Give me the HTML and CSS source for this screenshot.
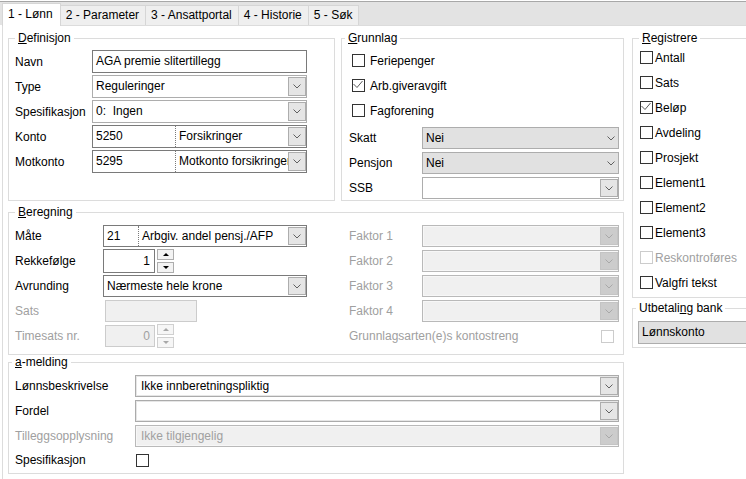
FILE: index.html
```html
<!DOCTYPE html>
<html lang="no">

<head>
    <meta charset="UTF-8">
    <meta name="viewport" content="width=device-width, initial-scale=1.0">
    <title>Lønnsart</title>
    <link rel="stylesheet" href="styles.css">
</head>

<body>
    <div class="tabs">
        <div class="tab active">1 - Lønn</div>
        <div class="tab">2 - Parameter</div>
        <div class="tab">3 - Ansattportal</div>
        <div class="tab">4 - Historie</div>
        <div class="tab">5 - Søk</div>
    </div>

    <div class="page">
        <div class="main">
            <div class="top-row">
                <!-- Definisjon -->
                <div class="group def">
                    <div class="legend"><u>D</u>efinisjon</div>
                    <div class="body">
                        <div class="row">
                            <span class="lbl">Navn</span>
                            <div class="field dark"><span class="val">AGA premie slitertillegg</span></div>
                        </div>
                        <div class="row">
                            <span class="lbl">Type</span>
                            <div class="field">
                                <span class="val">Reguleringer</span>
                                <span class="btn"><svg class="chev" width="8" height="5" viewBox="0 0 8 5"><path d="M.5 .5 4 4 7.5 .5" /></svg></span>
                            </div>
                        </div>
                        <div class="row">
                            <span class="lbl">Spesifikasjon</span>
                            <div class="field">
                                <span class="val">0:&nbsp; Ingen</span>
                                <span class="btn"><svg class="chev" width="8" height="5" viewBox="0 0 8 5"><path d="M.5 .5 4 4 7.5 .5" /></svg></span>
                            </div>
                        </div>
                        <div class="row">
                            <span class="lbl">Konto</span>
                            <div class="field dark">
                                <span class="code">5250</span>
                                <span class="val name">Forsikringer</span>
                                <span class="btn"><svg class="chev" width="8" height="5" viewBox="0 0 8 5"><path d="M.5 .5 4 4 7.5 .5" /></svg></span>
                            </div>
                        </div>
                        <div class="row">
                            <span class="lbl">Motkonto</span>
                            <div class="field dark">
                                <span class="code">5295</span>
                                <span class="val name">Motkonto forsikringer</span>
                                <span class="btn"><svg class="chev" width="8" height="5" viewBox="0 0 8 5"><path d="M.5 .5 4 4 7.5 .5" /></svg></span>
                            </div>
                        </div>
                    </div>
                </div>

                <!-- Grunnlag -->
                <div class="group grunnlag">
                    <div class="legend near"><u>G</u>runnlag</div>
                    <div class="body">
                        <div class="chk">
                            <span class="cb"></span>Feriepenger
                        </div>
                        <div class="chk">
                            <span class="cb"><svg width="11" height="11" viewBox="0 0 11 11"><path d="M.5 4 4 7.5 9.5 1" /></svg></span>Arb.giveravgift
                        </div>
                        <div class="chk">
                            <span class="cb"></span>Fagforening
                        </div>
                        <div class="row first">
                            <span class="lbl">Skatt</span>
                            <div class="field flat">
                                <span class="val">Nei</span>
                                <svg class="chev" width="8" height="5" viewBox="0 0 8 5"><path d="M.5 .5 4 4 7.5 .5" /></svg>
                            </div>
                        </div>
                        <div class="row">
                            <span class="lbl">Pensjon</span>
                            <div class="field flat">
                                <span class="val">Nei</span>
                                <svg class="chev" width="8" height="5" viewBox="0 0 8 5"><path d="M.5 .5 4 4 7.5 .5" /></svg>
                            </div>
                        </div>
                        <div class="row">
                            <span class="lbl">SSB</span>
                            <div class="field">
                                <span class="val"></span>
                                <span class="btn"><svg class="chev" width="8" height="5" viewBox="0 0 8 5"><path d="M.5 .5 4 4 7.5 .5" /></svg></span>
                            </div>
                        </div>
                    </div>
                </div>
            </div>

            <!-- Beregning -->
            <div class="group beregning">
                <div class="legend"><u>B</u>eregning</div>
                <div class="body">
                    <div class="col-left">
                        <div class="row">
                            <span class="lbl">Måte</span>
                            <div class="field dark">
                                <span class="code">21</span>
                                <span class="val name">Arbgiv. andel pensj./AFP</span>
                                <span class="btn"><svg class="chev" width="8" height="5" viewBox="0 0 8 5"><path d="M.5 .5 4 4 7.5 .5" /></svg></span>
                            </div>
                        </div>
                        <div class="row">
                            <span class="lbl">Rekkefølge</span>
                            <div class="field dark num"><span class="val">1</span></div>
                            <div class="spin">
                                <span class="spin-btn"><i class="up"></i></span>
                                <span class="spin-btn"><i class="down"></i></span>
                            </div>
                        </div>
                        <div class="row">
                            <span class="lbl">Avrunding</span>
                            <div class="field dark">
                                <span class="val">Nærmeste hele krone</span>
                                <span class="btn"><svg class="chev" width="8" height="5" viewBox="0 0 8 5"><path d="M.5 .5 4 4 7.5 .5" /></svg></span>
                            </div>
                        </div>
                        <div class="row">
                            <span class="lbl dim">Sats</span>
                            <div class="field off sats"></div>
                        </div>
                        <div class="row">
                            <span class="lbl dim">Timesats nr.</span>
                            <div class="field off num small"><span class="val">0</span></div>
                            <div class="spin off">
                                <span class="spin-btn"><i class="up"></i></span>
                                <span class="spin-btn"><i class="down"></i></span>
                            </div>
                        </div>
                    </div>
                    <div class="col-right">
                        <div class="row">
                            <span class="lbl dim">Faktor 1</span>
                            <div class="field off dbl"><span class="val"></span><span class="btn"><svg class="chev" width="8" height="5" viewBox="0 0 8 5"><path d="M.5 .5 4 4 7.5 .5" /></svg></span></div>
                        </div>
                        <div class="row">
                            <span class="lbl dim">Faktor 2</span>
                            <div class="field off dbl"><span class="val"></span><span class="btn"><svg class="chev" width="8" height="5" viewBox="0 0 8 5"><path d="M.5 .5 4 4 7.5 .5" /></svg></span></div>
                        </div>
                        <div class="row">
                            <span class="lbl dim">Faktor 3</span>
                            <div class="field off dbl"><span class="val"></span><span class="btn"><svg class="chev" width="8" height="5" viewBox="0 0 8 5"><path d="M.5 .5 4 4 7.5 .5" /></svg></span></div>
                        </div>
                        <div class="row">
                            <span class="lbl dim">Faktor 4</span>
                            <div class="field off dbl"><span class="val"></span><span class="btn"><svg class="chev" width="8" height="5" viewBox="0 0 8 5"><path d="M.5 .5 4 4 7.5 .5" /></svg></span></div>
                        </div>
                        <div class="row">
                            <span class="lbl dim wide">Grunnlagsarten(e)s kontostreng</span>
                            <span class="cb off"></span>
                        </div>
                    </div>
                </div>
            </div>

            <!-- a-melding -->
            <div class="group amelding">
                <div class="legend near"><u>a</u>-melding</div>
                <div class="body">
                    <div class="row">
                        <span class="lbl">Lønnsbeskrivelse</span>
                        <div class="field dbl">
                            <span class="val">Ikke innberetningspliktig</span>
                            <span class="btn"><svg class="chev" width="8" height="5" viewBox="0 0 8 5"><path d="M.5 .5 4 4 7.5 .5" /></svg></span>
                        </div>
                    </div>
                    <div class="row">
                        <span class="lbl">Fordel</span>
                        <div class="field dbl">
                            <span class="val"></span>
                            <span class="btn"><svg class="chev" width="8" height="5" viewBox="0 0 8 5"><path d="M.5 .5 4 4 7.5 .5" /></svg></span>
                        </div>
                    </div>
                    <div class="row">
                        <span class="lbl dim">Tilleggsopplysning</span>
                        <div class="field off dbl">
                            <span class="val">Ikke tilgjengelig</span>
                            <span class="btn"><svg class="chev" width="8" height="5" viewBox="0 0 8 5"><path d="M.5 .5 4 4 7.5 .5" /></svg></span>
                        </div>
                    </div>
                    <div class="row last">
                        <span class="lbl">Spesifikasjon</span>
                        <span class="cb"></span>
                    </div>
                </div>
            </div>
        </div>

        <div class="side">
            <div class="group registrere">
                <div class="legend"><u>R</u>egistrere</div>
                <div class="body">
                    <div class="chk"><span class="cb"></span>Antall</div>
                    <div class="chk"><span class="cb"></span>Sats</div>
                    <div class="chk"><span class="cb"><svg width="11" height="11" viewBox="0 0 11 11"><path d="M.5 4 4 7.5 9.5 1" /></svg></span>Beløp</div>
                    <div class="chk"><span class="cb"></span>Avdeling</div>
                    <div class="chk"><span class="cb"></span>Prosjekt</div>
                    <div class="chk"><span class="cb"></span>Element1</div>
                    <div class="chk"><span class="cb"></span>Element2</div>
                    <div class="chk"><span class="cb"></span>Element3</div>
                    <div class="chk dim"><span class="cb off"></span>Reskontroføres</div>
                    <div class="chk"><span class="cb"></span>Valgfri tekst</div>
                </div>
            </div>
            <div class="group bank">
                <div class="legend near">Utbetali<u>n</u>g bank</div>
                <div class="body">
                    <div class="field flat"><span class="val">Lønnskonto</span></div>
                </div>
            </div>
        </div>
    </div>
</body>

</html>
```

FILE: styles.css
```css
* {
    margin: 0;
    padding: 0;
    box-sizing: border-box;
}

html,
body {
    overflow: hidden;
}

body {
    width: 746px;
    height: 479px;
    background: #fff;
    color: #000;
    font: 12px "Liberation Sans", Arial, sans-serif;
}

/* tab strip */
.tabs {
    display: flex;
    align-items: flex-end;
    height: 24px;
    margin-top: 1px;
    padding-left: 2px;
    border-top: 1px solid #a8a8a8;
    background: #e3e3e3;
}

.tab {
    height: 20px;
    line-height: 19px;
    padding: 0 6px 0 5px;
    margin-left: -1px;
    border: 1px solid #d6d6d6;
    border-bottom: none;
    background: #efefef;
    white-space: nowrap;
}

.tab.active {
    position: relative;
    z-index: 1;
    height: 23px;
    line-height: 21px;
    margin-left: 0;
    margin-bottom: -1px;
    padding: 0 7px 0 5px;
    background: #fff;
}

/* tab page */
.page {
    display: flex;
    gap: 8px;
    height: 454px;
    margin-left: 2px;
    padding: 12px 0 0 5px;
    border-top: 1px solid #dcdcdc;
    border-left: 1px solid #dcdcdc;
}

.main {
    flex: none;
    width: 616px;
}

.side {
    flex: none;
    width: 130px;
}

.top-row {
    display: flex;
    gap: 6px;
    height: 163px;
}

.group {
    border: 1px solid #dcdcdc;
}

.legend {
    width: fit-content;
    height: 14px;
    line-height: 14px;
    margin: -8px 0 0 6px;
    padding: 0 3px;
    background: #fff;
}

.legend.near {
    margin-left: 3px;
}

.def {
    width: 327px;
}

.grunnlag {
    width: 283px;
}

.beregning {
    margin-top: 11px;
}

.amelding {
    margin-top: 7px;
}

/* rows and labels */
.row {
    display: flex;
    align-items: center;
    height: 22px;
    margin-bottom: 3px;
}

.lbl {
    flex: none;
    white-space: nowrap;
}

.dim {
    color: #a0a0a0;
}

/* fields */
.field {
    display: flex;
    align-items: stretch;
    height: 22px;
    border: 1px solid #adadad;
    background: #fff;
}

.field.dark {
    border-color: #7a7a7a;
}

.field.dbl {
    border-color: #ababab;
    box-shadow: inset 0 0 0 1px #e6e6e6;
}

.field .val {
    flex: 1;
    min-width: 0;
    padding-left: 3px;
    line-height: 20px;
    white-space: nowrap;
    overflow: hidden;
}

.field .code {
    flex: none;
    padding-left: 3px;
    line-height: 20px;
}

.field .name {
    border-left: 1px dotted #7a7a7a;
}

.field .btn {
    flex: none;
    display: flex;
    align-items: center;
    justify-content: center;
    width: 18px;
    margin: 1px 0;
    border: 1px solid #adadad;
    background: #e5e5e5;
}

.chev path {
    fill: none;
    stroke: #606060;
}

.field.flat {
    align-items: center;
    background: #e1e1e1;
    border-color: #adadad;
}

.field.flat .chev {
    margin-right: 3px;
}

.field.off {
    color: #a0a0a0;
    background: #f0f0f0;
    border-color: #cccccc;
}

.field.off.dbl {
    border-color: #b9b9b9;
    box-shadow: inset 0 0 0 1px #f7f7f7;
}

.field.off .btn {
    background: #cccccc;
    border-color: #c4c4c4;
}

.field.off .chev path {
    stroke: #a8a8a8;
}

/* spinner */
.spin {
    display: flex;
    flex-direction: column;
    gap: 2px;
    margin-left: 2px;
}

.spin-btn {
    display: flex;
    align-items: center;
    justify-content: center;
    width: 17px;
    height: 11px;
    border: 1px solid #adadad;
    background: #f3f3f3;
}

.spin .up {
    border-left: 3px solid transparent;
    border-right: 3px solid transparent;
    border-bottom: 3px solid #000;
}

.spin .down {
    border-left: 3px solid transparent;
    border-right: 3px solid transparent;
    border-top: 3px solid #000;
}

.spin.off .spin-btn {
    border-color: #d0d0d0;
    background: #f6f6f6;
}

.spin.off .up {
    border-bottom-color: #a8a8a8;
}

.spin.off .down {
    border-top-color: #a8a8a8;
}

/* checkboxes */
.cb {
    flex: none;
    display: flex;
    width: 13px;
    height: 13px;
    border: 1px solid #333;
    background: #fff;
}

.cb path {
    fill: none;
    stroke: #5a5a5a;
}

.cb.off {
    border-color: #cccccc;
}

.chk {
    display: flex;
    align-items: center;
    height: 25px;
    white-space: nowrap;
}

/* Definisjon */
.def .body {
    padding: 5px 4px 0 6px;
}

.def .lbl {
    width: 77px;
}

.def .row {
    height: 23px;
    margin-bottom: 2px;
}

.def .field {
    width: 215px;
    height: 23px;
}

.def .field .val,
.def .field .code {
    line-height: 21px;
}

.def .code {
    width: 82px;
}

/* Grunnlag */
.grunnlag .body {
    padding: 3px 4px 0 7px;
}

.grunnlag .chk {
    padding-left: 3px;
    gap: 5px;
}

.grunnlag .row.first {
    margin-top: 4px;
}

.grunnlag .lbl {
    width: 73px;
}

.grunnlag .field {
    width: 197px;
}

/* Beregning */
.beregning .body {
    display: flex;
    padding: 6px 4px 4px 6px;
}

.col-left {
    flex: none;
    width: 334px;
}

.col-left .lbl {
    width: 88px;
}

.col-left .field {
    width: 204px;
}

.col-left .code {
    width: 34px;
}

.col-left .field.num {
    width: 52px;
    height: 24px;
}

.col-left .field.num .val {
    padding: 0 4px 0 0;
    text-align: right;
    line-height: 22px;
}

.col-left .field.num.small {
    width: 50px;
    height: 22px;
    margin-left: 2px;
}

.col-left .field.num.small .val {
    line-height: 20px;
}

.col-left .field.sats {
    width: 92px;
    margin-left: 2px;
}

.col-right {
    flex: 1;
}

.col-right .lbl {
    width: 73px;
}

.col-right .lbl.wide {
    flex: 1;
}

.col-right .field {
    width: 197px;
}

.col-right .cb {
    margin-right: 5px;
}

/* a-melding */
.amelding .body {
    padding: 6px 4px 0 6px;
}

.amelding .lbl {
    width: 120px;
}

.amelding .field {
    width: 484px;
}

.amelding .field .val {
    padding-left: 5px;
}

.amelding .row.last {
    height: 20px;
}

.amelding .row.last .cb {
    margin-left: 1px;
}

/* Registrere */
.registrere .body {
    padding: 0 0 2px 7px;
}

.registrere .chk {
    gap: 2px;
}

.bank {
    margin-top: 10px;
}

.bank .body {
    padding: 6px 0 3px 5px;
}

.bank .field {
    width: 124px;
    height: 23px;
}

.bank .field .val {
    line-height: 21px;
}
```
